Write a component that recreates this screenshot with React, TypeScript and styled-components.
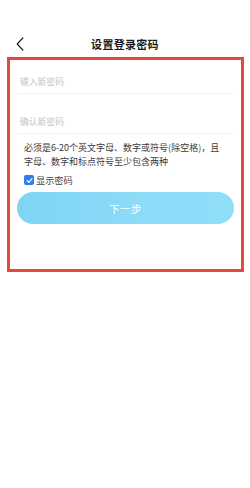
import React, { useState } from "react";
import styled, { createGlobalStyle } from "styled-components";

const GlobalStyle = createGlobalStyle`
  html, body {
    margin: 0;
    padding: 0;
    background: #ffffff;
    font-family: "Noto Sans CJK SC", "Noto Sans", sans-serif;
  }
`;

const Page = styled.div`
  width: 250px;
  min-height: 488px;
  background: #ffffff;
`;

const Header = styled.div`
  display: flex;
  align-items: center;
  justify-content: center;
  position: relative;
  height: 24px;
  padding-top: 32px;
  margin-bottom: 1px;
`;

const BackButton = styled.button`
  position: absolute;
  left: 13px;
  bottom: 4px;
  width: 14px;
  height: 16px;
  padding: 0;
  border: none;
  background: none;
  display: flex;
  align-items: center;
  justify-content: center;
`;

const Title = styled.h1`
  margin: 0;
  font-size: 11px;
  font-weight: 700;
  color: #1a1a1a;
  letter-spacing: 0.3px;
`;

const Frame = styled.div`
  margin: 0 6px 0 7px;
  border: 3.5px solid #e8483c;
  height: 209px;
  padding: 0 7px;
`;

const Field = styled.div<{ first?: boolean }>`
  padding: ${(p) => (p.first ? "16px" : "22px")} 3px 5px;
  border-bottom: 1px solid #f1f1f1;
`;

const Input = styled.input`
  display: block;
  width: 100%;
  border: none;
  outline: none;
  padding: 0;
  height: 12px;
  font-family: inherit;
  font-size: 8.8px;
  line-height: 12px;
  color: #333333;
  &::placeholder {
    color: #c4c4c4;
  }
`;

const Hint = styled.p`
  margin: 7px 0 0;
  padding-left: 7px;
  font-size: 9px;
  line-height: 14px;
  color: #3a3a3a;
`;

const CheckRow = styled.label`
  display: flex;
  align-items: center;
  gap: 2px;
  margin: 5px 0 0 7px;
  height: 12px;
  font-size: 9.2px;
  color: #444444;
`;

const Box = styled.span<{ checked: boolean }>`
  width: 10px;
  height: 10px;
  border-radius: 2px;
  background: ${(p) => (p.checked ? "#2d7cf0" : "#ffffff")};
  border: ${(p) => (p.checked ? "none" : "1px solid #999")};
  display: flex;
  align-items: center;
  justify-content: center;
`;

const NextButton = styled.button`
  display: block;
  width: 100%;
  height: 32px;
  margin-top: 6px;
  border: none;
  border-radius: 16px;
  background: linear-gradient(90deg, #7fd4f4 0%, #8ddcf8 60%, #8fdff9 100%);
  color: #ffffff;
  font-family: inherit;
  font-size: 10.5px;
  letter-spacing: 0.5px;
`;

const App = () => {
  const [pwd, setPwd] = useState("");
  const [confirm, setConfirm] = useState("");
  const [show, setShow] = useState(true);

  return (
    <Page>
      <GlobalStyle />
      <Header>
        <BackButton aria-label="返回">
          <svg width="8" height="14" viewBox="0 0 8 14">
            <path d="M6.8 1 L1.2 7 L6.8 13" fill="none" stroke="#222" strokeWidth="1.2" strokeLinecap="round" strokeLinejoin="round" />
          </svg>
        </BackButton>
        <Title>设置登录密码</Title>
      </Header>
      <Frame>
        <Field first>
          <Input
            type={show ? "text" : "password"}
            placeholder="输入新密码"
            value={pwd}
            onChange={(e) => setPwd(e.target.value)}
          />
        </Field>
        <Field>
          <Input
            type={show ? "text" : "password"}
            placeholder="确认新密码"
            value={confirm}
            onChange={(e) => setConfirm(e.target.value)}
          />
        </Field>
        <Hint>
          必须是6-20个英文字母、数字或符号(除空格)，且
          <br />
          字母、数字和标点符号至少包含两种
        </Hint>
        <CheckRow onClick={() => setShow(!show)}>
          <Box checked={show}>
            {show && (
              <svg width="7" height="7" viewBox="0 0 7 7">
                <path d="M1 3.6 L2.8 5.3 L6 1.6" fill="none" stroke="#fff" strokeWidth="1.2" strokeLinecap="round" strokeLinejoin="round" />
              </svg>
            )}
          </Box>
          显示密码
        </CheckRow>
        <NextButton>下一步</NextButton>
      </Frame>
    </Page>
  );
};

export default App;
